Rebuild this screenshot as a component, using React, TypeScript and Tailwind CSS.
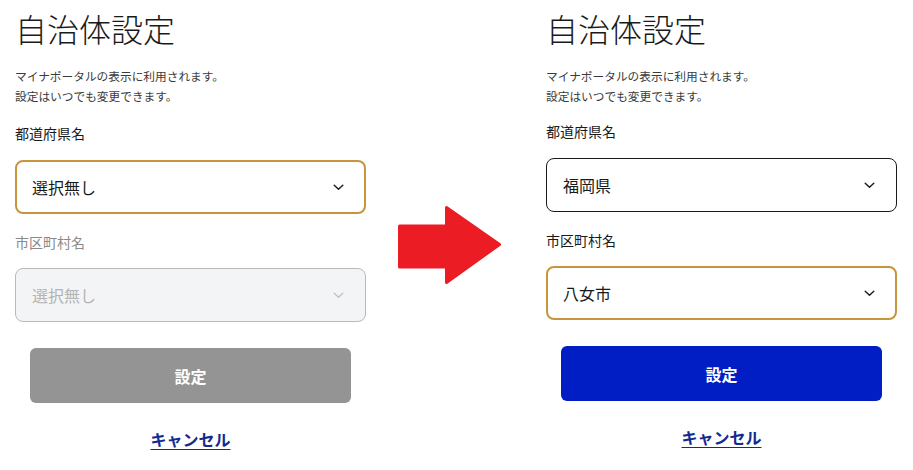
import React from 'react';

const font = { fontFamily: '"Noto Sans CJK JP", "Noto Sans", sans-serif' };

const Chevron = ({ disabled }: { disabled?: boolean }) => (
  <svg width="11" height="7" viewBox="0 0 11 7" className="shrink-0">
    <polyline
      points="1.2,1.2 5.5,5.3 9.8,1.2"
      fill="none"
      stroke={disabled ? '#c2c2c2' : '#1a1a1a'}
      strokeWidth="1.4"
      strokeLinecap="round"
      strokeLinejoin="round"
    />
  </svg>
);

interface SelectProps {
  value: string;
  state: 'focus' | 'normal' | 'disabled';
}

const SelectBox: React.FC<SelectProps> = ({ value, state }) => {
  const cls =
    state === 'focus'
      ? 'border-2 border-[#c6953c] bg-white text-[#1a1a1a] pl-[15px] pr-[20px]'
      : state === 'normal'
      ? 'border border-[#1a1a1a] bg-white text-[#1a1a1a] pl-[16px] pr-[21px]'
      : 'border border-[#b9b9b9] bg-[#f3f4f6] text-[#b3b3b3] pl-[16px] pr-[21px]';
  return (
    <div className={`h-[54px] rounded-[8px] flex items-center justify-between text-[16px] ${cls}`}>
      <span>{value}</span>
      <Chevron disabled={state === 'disabled'} />
    </div>
  );
};

interface PanelProps {
  pref: string;
  prefState: 'focus' | 'normal';
  city: string;
  cityState: 'focus' | 'disabled';
  active: boolean;
}

const Panel: React.FC<PanelProps> = ({ pref, prefState, city, cityState, active }) => (
  <div className="w-[351px] shrink-0 flex flex-col" style={font}>
    <h1 className="mt-[8px] text-[32px] leading-[40px] font-light text-[#1a1a1a]">自治体設定</h1>
    <p className="mt-[18px] text-[11.7px] leading-[20px] text-[#3a3a3a]">
      マイナポータルの表示に利用されます。
      <br />
      設定はいつでも変更できます。
    </p>
    <div className={`${active ? 'mt-[15px]' : 'mt-[17px]'} text-[14px] leading-[20px] text-[#1a1a1a]`}>都道府県名</div>
    <div className="mt-[17px]">
      <SelectBox value={pref} state={prefState} />
    </div>
    <div
      className={`mt-[18px] text-[14px] leading-[20px] ${cityState === 'disabled' ? 'text-[#8a8a8a]' : 'text-[#1a1a1a]'}`}
    >
      市区町村名
    </div>
    <div className="mt-[16px]">
      <SelectBox value={city} state={cityState} />
    </div>
    <button
      className={`mt-[26px] mx-[15px] h-[55px] rounded-[6px] text-white font-bold text-[16px] ${
        active ? 'bg-[#001ec4]' : 'bg-[#949494]'
      }`}
    >
      設定
    </button>
    <div className="mt-[24px] text-center">
      <a className="text-[16px] leading-[24px] font-bold text-[#132a8e] underline underline-offset-[3px]">キャンセル</a>
    </div>
  </div>
);

const Arrow = () => (
  <svg width="104" height="80" viewBox="0 0 104 80">
    <path
      d="M1.5,20 H48.5 V1.5 L101.5,38.5 L48.5,76.5 V61 H1.5 Z"
      fill="#ec1c24"
      stroke="#ec1c24"
      strokeWidth="3"
      strokeLinejoin="round"
    />
  </svg>
);

export default function App() {
  return (
    <div className="w-[913px] h-[470px] bg-white flex overflow-hidden">
      <div className="pl-[15px]">
        <Panel pref="選択無し" prefState="focus" city="選択無し" cityState="disabled" active={false} />
      </div>
      <div className="w-[180px] shrink-0 pt-[206px] pl-[32px]">
        <Arrow />
      </div>
      <Panel pref="福岡県" prefState="normal" city="八女市" cityState="focus" active={true} />
    </div>
  );
}
